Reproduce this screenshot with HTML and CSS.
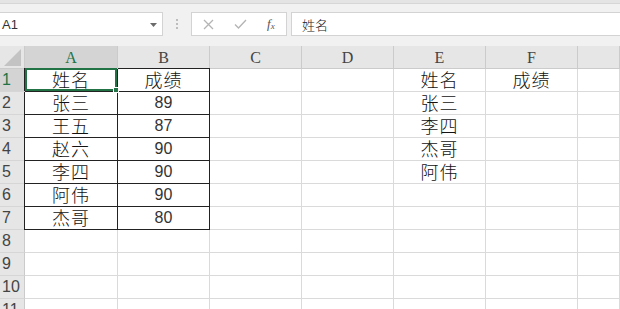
FILE: index.html
```html
<!DOCTYPE html>
<html lang="zh-CN">
<head>
<meta charset="utf-8">
<title>Sheet</title>
<link rel="stylesheet" href="styles.css">
</head>
<body>
<div class="app">
  <div class="topstrip"></div>
  <div class="fbar">
    <div class="namebox">
      <span class="ref">A1</span>
      <svg class="caret" width="7" height="4" viewBox="0 0 7 4"><path d="M0 0h7L3.5 4z" fill="#6b6b6b"/></svg>
    </div>
    <div class="dots"><i></i><i></i><i></i></div>
    <div class="fxbox">
      <svg class="ic" width="11" height="11" viewBox="0 0 11 11"><path d="M1 1l9 9M10 1l-9 9" stroke="#b4b4b4" stroke-width="1.3" fill="none"/></svg>
      <svg class="ic" width="13" height="10" viewBox="0 0 13 10"><path d="M1 5.5l3.5 3.5L12 1" stroke="#b4b4b4" stroke-width="1.3" fill="none"/></svg>
      <span class="fx">f<sub>x</sub></span>
    </div>
    <div class="finput">姓名</div>
  </div>

  <div class="sheet">
    <div class="hd corner"><svg width="18" height="17" viewBox="0 0 18 17"><path d="M0 17L17 0V17z" fill="#c3c3c3"/></svg></div>
    <div class="hd col sel">A</div>
    <div class="hd col">B</div>
    <div class="hd col">C</div>
    <div class="hd col">D</div>
    <div class="hd col">E</div>
    <div class="hd col">F</div>
    <div class="hd col"></div>

    <div class="hd row sel">1</div>
    <div class="c t tl tt active">姓名<span class="selbox"><span class="handle"></span></span></div>
    <div class="c t tt">成绩</div>
    <div class="c"></div><div class="c"></div>
    <div class="c">姓名</div><div class="c">成绩</div><div class="c"></div>

    <div class="hd row">2</div>
    <div class="c t tl">张三</div><div class="c t num">89</div>
    <div class="c"></div><div class="c"></div>
    <div class="c">张三</div><div class="c"></div><div class="c"></div>

    <div class="hd row">3</div>
    <div class="c t tl">王五</div><div class="c t num">87</div>
    <div class="c"></div><div class="c"></div>
    <div class="c">李四</div><div class="c"></div><div class="c"></div>

    <div class="hd row">4</div>
    <div class="c t tl">赵六</div><div class="c t num">90</div>
    <div class="c"></div><div class="c"></div>
    <div class="c">杰哥</div><div class="c"></div><div class="c"></div>

    <div class="hd row">5</div>
    <div class="c t tl">李四</div><div class="c t num">90</div>
    <div class="c"></div><div class="c"></div>
    <div class="c">阿伟</div><div class="c"></div><div class="c"></div>

    <div class="hd row">6</div>
    <div class="c t tl">阿伟</div><div class="c t num">90</div>
    <div class="c"></div><div class="c"></div>
    <div class="c"></div><div class="c"></div><div class="c"></div>

    <div class="hd row">7</div>
    <div class="c t tl">杰哥</div><div class="c t num">80</div>
    <div class="c"></div><div class="c"></div>
    <div class="c"></div><div class="c"></div><div class="c"></div>

    <div class="hd row">8</div>
    <div class="c"></div><div class="c"></div><div class="c"></div><div class="c"></div>
    <div class="c"></div><div class="c"></div><div class="c"></div>

    <div class="hd row">9</div>
    <div class="c"></div><div class="c"></div><div class="c"></div><div class="c"></div>
    <div class="c"></div><div class="c"></div><div class="c"></div>

    <div class="hd row">10</div>
    <div class="c"></div><div class="c"></div><div class="c"></div><div class="c"></div>
    <div class="c"></div><div class="c"></div><div class="c"></div>

    <div class="hd row">11</div>
    <div class="c"></div><div class="c"></div><div class="c"></div><div class="c"></div>
    <div class="c"></div><div class="c"></div><div class="c"></div>
  </div>
</div>
</body>
</html>
```

FILE: styles.css
```css
* { box-sizing: border-box; }

html, body {
  margin: 0;
  padding: 0;
  width: 620px;
  height: 309px;
  overflow: hidden;
  background: #f1f1f1;
}

.app {
  width: 620px;
  height: 309px;
  display: flex;
  flex-direction: column;
  font-family: "Liberation Sans", "Noto Sans CJK SC", sans-serif;
}

.topstrip {
  height: 4px;
  background: #e4e4e4;
  border-bottom: 1px solid #d6d6d6;
}

.fbar {
  display: flex;
  align-items: stretch;
  height: 24px;
  margin-top: 8px;
}

.namebox {
  width: 163px;
  background: #fff;
  border: 1px solid #d3d3d3;
  border-left: none;
  display: flex;
  align-items: center;
  justify-content: space-between;
  padding: 0 5px 0 2px;
}

.ref {
  font-size: 13px;
  color: #333;
}

.caret { margin-top: 1px; }

.dots {
  width: 28px;
  display: flex;
  flex-direction: column;
  align-items: center;
  justify-content: center;
  gap: 2px;
}

.dots i {
  display: block;
  width: 2px;
  height: 2px;
  background: #bdbdbd;
}

.fxbox {
  width: 96px;
  background: #fff;
  border: 1px solid #d3d3d3;
  display: flex;
  align-items: center;
  padding-left: 11px;
}

.fxbox .ic:first-child { margin-right: 20px; }
.fxbox .ic:nth-child(2) { margin-right: 20px; }

.fx {
  font-family: "Liberation Serif", serif;
  font-style: italic;
  font-size: 13px;
  color: #555;
  line-height: 1;
}

.fx sub {
  font-size: 9px;
  vertical-align: -1px;
}

.finput {
  margin-left: 4px;
  flex: 1;
  background: #fff;
  border: 1px solid #d3d3d3;
  border-right: none;
  font-family: "Noto Sans CJK SC", sans-serif;
  font-weight: 300;
  font-size: 13px;
  color: #222;
  display: flex;
  align-items: center;
  padding-left: 10px;
}

.sheet {
  margin-top: 10px;
  display: grid;
  grid-template-columns: 25px 93px 92px 92px 92px 92px 92px 1fr;
  grid-auto-rows: 23px;
  background: #fff;
  flex: 1;
  overflow: hidden;
}

.hd {
  background: #e6e6e6;
  border-right: 1px solid #cbcbcb;
  border-bottom: 1px solid #cbcbcb;
  color: #444;
}

.corner {
  display: flex;
  align-items: flex-end;
  justify-content: flex-end;
  padding: 0 2px 2px 0;
}

.col {
  font-family: "Liberation Serif", serif;
  font-size: 16px;
  display: flex;
  align-items: center;
  justify-content: center;
  padding-top: 2px;
}

.row {
  font-family: "Liberation Sans", sans-serif;
  font-size: 16px;
  display: flex;
  align-items: flex-end;
  padding: 0 0 2px 2px;
  border-bottom-color: #d6d6d6;
}

.hd.sel {
  background: #d4d4d4;
  color: #217346;
}

.c {
  border-right: 1px solid #dadada;
  border-bottom: 1px solid #dadada;
  display: flex;
  align-items: flex-end;
  justify-content: center;
  font-family: "Liberation Sans", "Noto Sans CJK SC", sans-serif;
  font-weight: 300;
  font-size: 18px;
  line-height: 20px;
  color: #111;
  letter-spacing: 1px;
}

.c.num {
  font-weight: 400;
  font-size: 16px;
  letter-spacing: 0;
  padding-bottom: 1px;
  color: #333;
}

.c.t {
  border-right-color: #222;
  border-bottom-color: #222;
}

.c.tl { box-shadow: -1px 0 0 #222; }
.c.tt { box-shadow: 0 -1px 0 #222; }
.c.tl.tt { box-shadow: -1px -1px 0 #222; }

.active { position: relative; }

.selbox {
  position: absolute;
  top: -1px;
  left: 0;
  right: 0;
  bottom: 0;
  border: 2px solid #217346;
}

.handle {
  position: absolute;
  right: -4px;
  bottom: -4px;
  width: 6px;
  height: 6px;
  background: #217346;
  border: 1px solid #fff;
}
```
